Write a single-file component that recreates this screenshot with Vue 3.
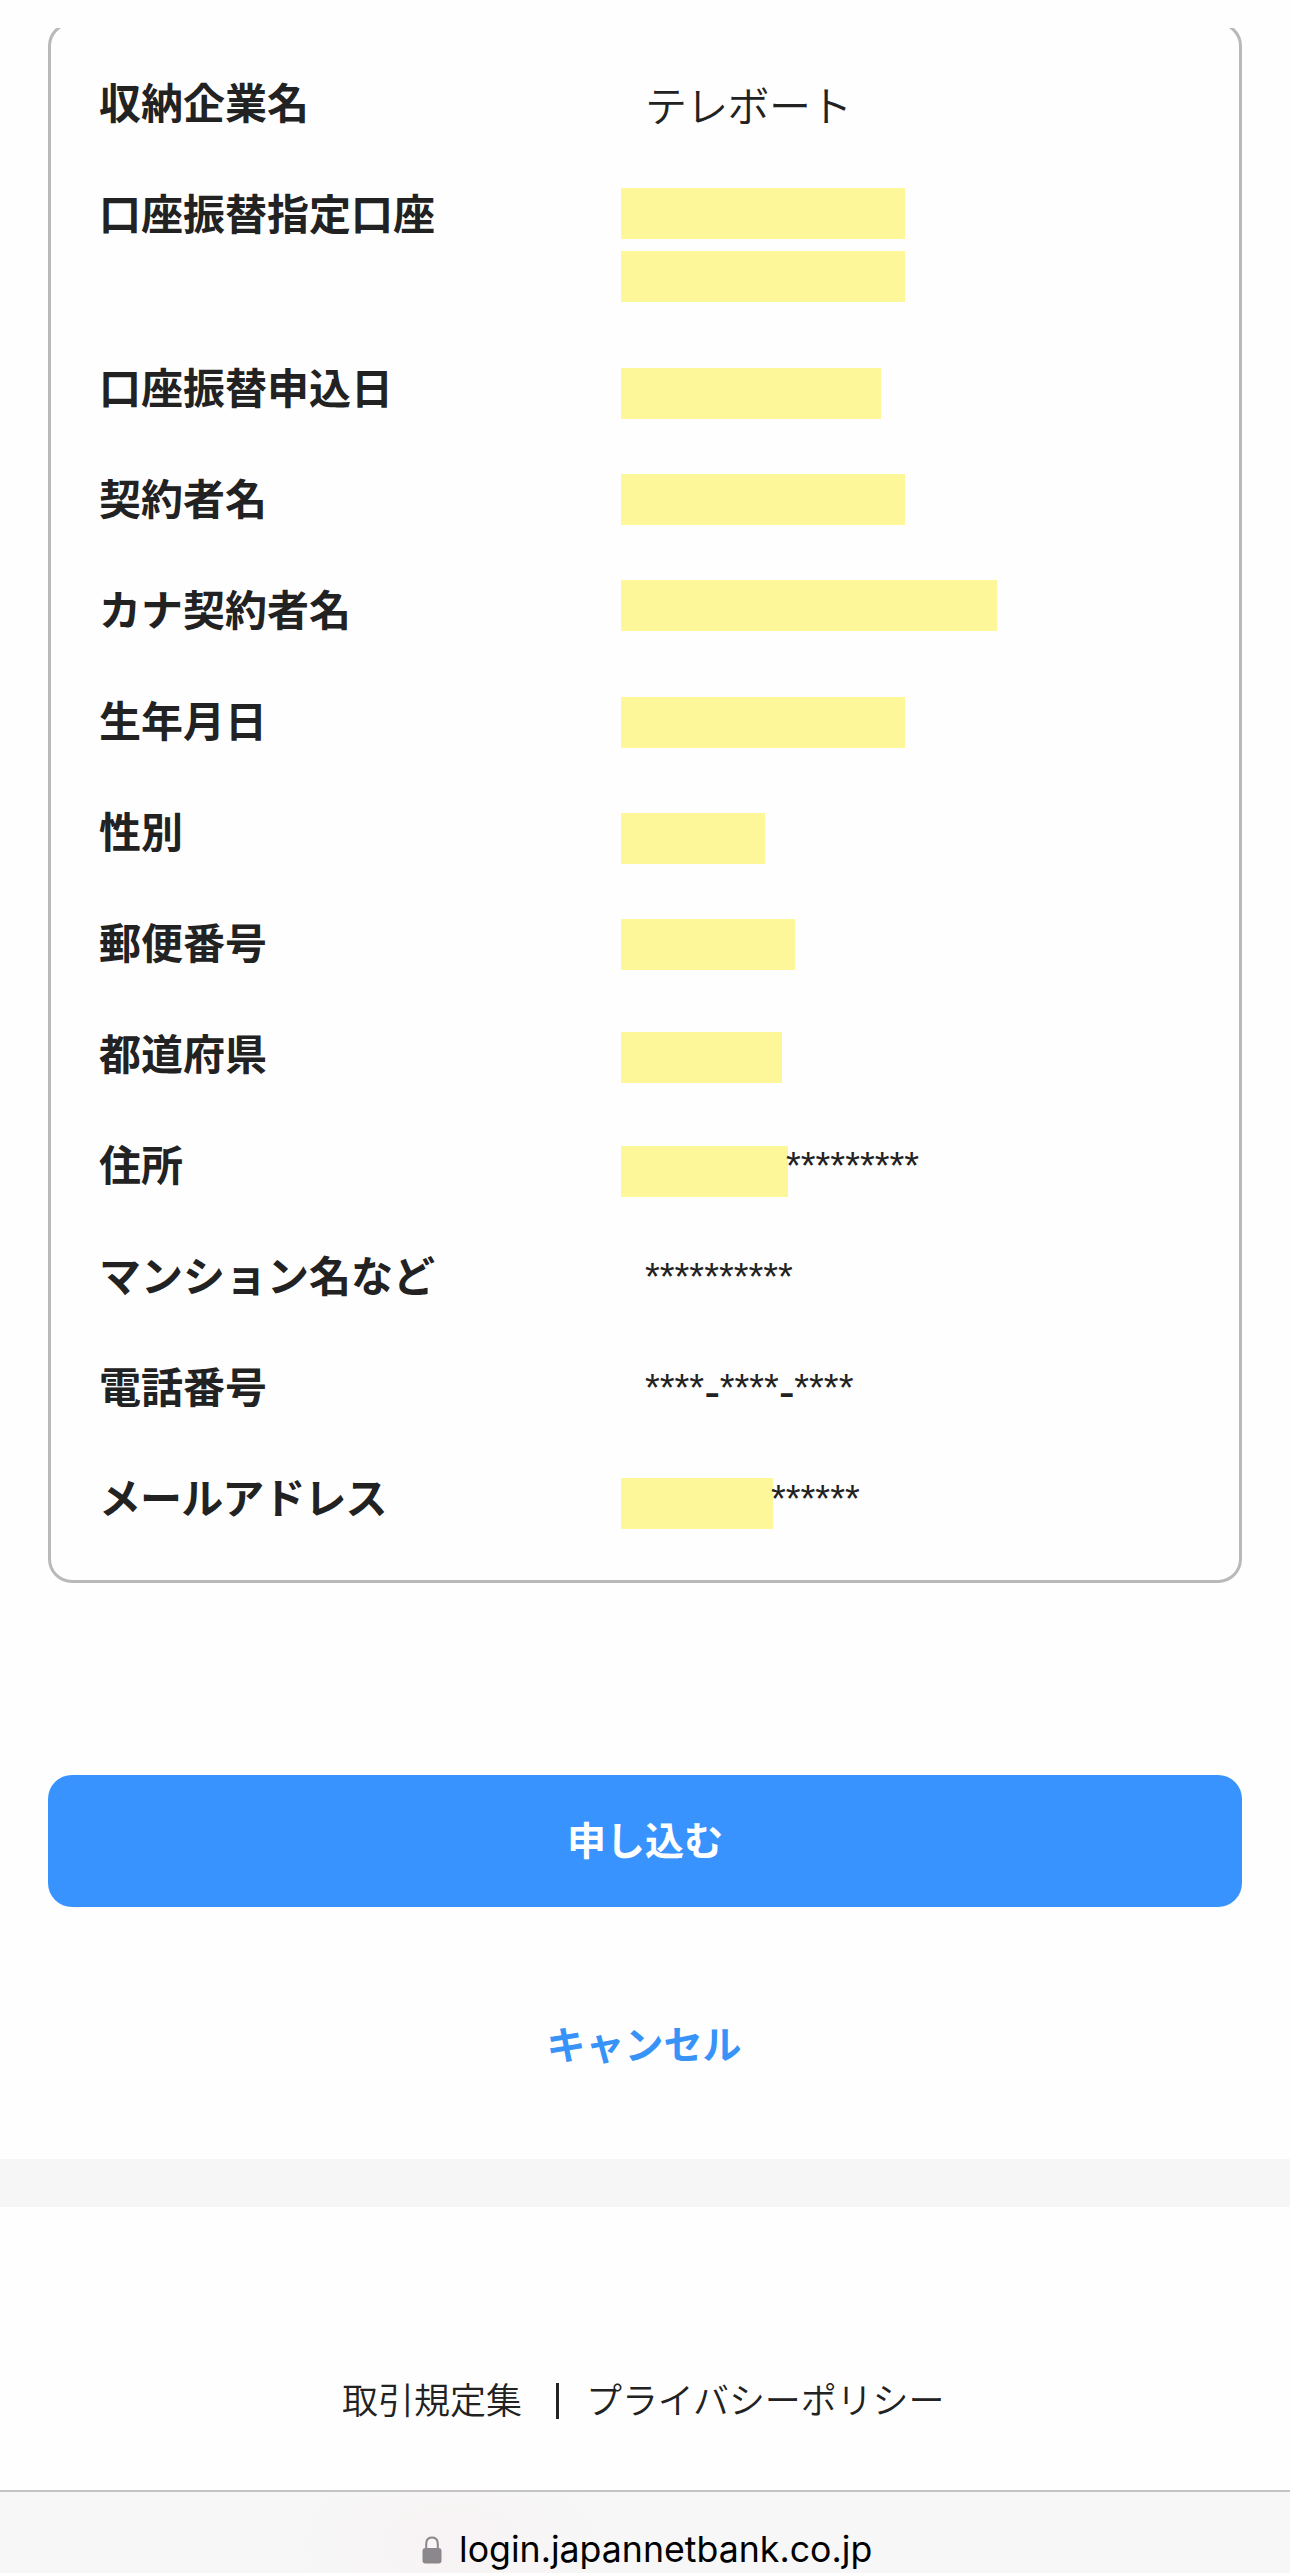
<script setup>
// Masked values: `top` is the gap from the row's top edge to its highlight block.
const rows = [
  { label: '収納企業名', text: 'テレボート' },
  { label: '口座振替指定口座', tall: true, top: 29, masks: [284, 284] },
  { label: '口座振替申込日', top: 35, masks: [260] },
  { label: '契約者名', top: 30, masks: [284] },
  { label: 'カナ契約者名', top: 25, masks: [376] },
  { label: '生年月日', top: 31, masks: [284] },
  { label: '性別', top: 36, masks: [144] },
  { label: '郵便番号', top: 31, masks: [174] },
  { label: '都道府県', top: 33, masks: [161] },
  { label: '住所', top: 36, masks: [167], stars: ['*********'] },
  { label: 'マンション名など', stars: ['**********'] },
  { label: '電話番号', stars: ['****', '****', '****'] },
  { label: 'メールアドレス', tight: true, top: 35, masks: [152], stars: ['******'] },
]
</script>

<template>
  <div class="page">
    <main class="content">
      <div class="card-clip">
        <dl class="card">
          <div v-for="row in rows" :key="row.label" class="row" :class="{ tall: row.tall }">
            <dt class="label" :class="{ tight: row.tight }">{{ row.label }}</dt>
            <dd class="value">
              <div v-if="row.masks" class="masks" :style="{ paddingTop: row.top + 'px' }">
                <span v-for="(w, i) in row.masks" :key="i" class="mask" :style="{ width: w + 'px' }"></span>
              </div>
              <span v-if="row.text" class="text">{{ row.text }}</span>
              <span v-if="row.stars" class="stars" :class="{ indent: !row.masks }"><template v-for="(s, i) in row.stars" :key="i"><span v-if="i" class="dash">-</span>{{ s }}</template></span>
            </dd>
          </div>
        </dl>
      </div>
      <button class="submit" type="button">申し込む</button>
      <a class="cancel">キャンセル</a>
    </main>
    <div class="band"></div>
    <footer class="footer">
      <a>取引規定集</a>
      <span class="divider"></span>
      <a class="policy">プライバシーポリシー</a>
    </footer>
    <div class="urlbar">
      <svg class="lock" viewBox="0 0 20 28" width="20" height="28">
        <path d="M4.2 13V8.2C4.2 4 6.500 1.500 10 1.500s5.800 2.500 5.800 6.700V13" fill="none" stroke="#8a888c" stroke-width="2" />
        <rect x="0.500" y="12" width="19" height="15.500" rx="3" fill="#8a888c" />
      </svg>
      <span class="url">login.japannetbank.co.jp</span>
    </div>
  </div>
</template>

<style>
body {
  margin: 0;
  background: #fefefe;
}
</style>

<style scoped>
.page {
  display: flex;
  flex-direction: column;
  width: 1290px;
  height: 2573px;
  overflow: hidden;
  background: #fefefe;
  color: #222;
  font-family: "Noto Sans CJK JP", sans-serif;
}
.content {
  display: flex;
  flex-direction: column;
  box-sizing: border-box;
  height: 2159px;
  flex: none;
  padding: 28px 48px 0;
}
.card-clip {
  overflow: hidden;
}
.card {
  box-sizing: border-box;
  height: 1561px;
  margin: -6px 0 0;
  padding: 23px 0 0 48px;
  border: 3px solid #b9b9b9;
  border-radius: 24px;
}
.row {
  display: grid;
  grid-template-columns: 522px 1fr;
  height: 111px;
}
.row.tall {
  height: 174px;
}
.label {
  font-size: 42px;
  font-weight: 700;
  line-height: 105px;
  white-space: nowrap;
}
.label.tight {
  letter-spacing: -0.9px;
}
.value {
  display: flex;
  margin: 0;
  font-size: 42px;
  line-height: 111px;
}
.masks {
  display: flex;
  flex-direction: column;
  gap: 12px;
}
.mask {
  height: 51px;
  background: #fdf79a;
}
.text {
  padding-left: 24px;
  font-weight: 350;
  letter-spacing: -0.7px;
}
.stars {
  margin: 1px 0 0 -2px;
  font-family: "Liberation Sans", sans-serif;
  font-size: 38px;
  white-space: nowrap;
}
.stars.indent {
  margin-left: 24px;
}
.dash {
  position: relative;
  top: 7px;
  margin-right: -0.5px;
  font-size: 48px;
  line-height: 0;
}
.submit {
  height: 132px;
  margin: 192px 0 0;
  padding: 0 0 5px;
  border: 0;
  border-radius: 24px;
  background: #3893ff;
  color: #fff;
  font: 700 39px/127px "Noto Sans CJK JP", sans-serif;
}
.cancel {
  margin: 105px 2px 0 0;
  color: #3893f8;
  font-size: 39px;
  font-weight: 700;
  line-height: 60px;
  text-align: center;
}
.band {
  flex: none;
  height: 48px;
  background: #f6f6f6;
}
.footer {
  display: flex;
  flex: none;
  box-sizing: border-box;
  height: 283px;
  padding: 161px 0 0 342px;
  font-size: 36px;
  font-weight: 350;
  line-height: 60px;
}
.divider {
  width: 3px;
  height: 36px;
  margin: 15px 27px 0 34px;
  background: #222;
}
.policy {
  letter-spacing: -0.1px;
}
.urlbar {
  display: flex;
  flex: 1;
  align-items: flex-start;
  padding: 44px 0 0 422px;
  border-top: 2px solid #c4c4c6;
  background: radial-gradient(ellipse 160px 90px at 450px 50px, #f8f3f4, #f7f7f7);
}
.url {
  margin: -7px 0 0 17px;
  color: #000;
  font: 400 35.7px/40px Inter, sans-serif;
}
</style>
